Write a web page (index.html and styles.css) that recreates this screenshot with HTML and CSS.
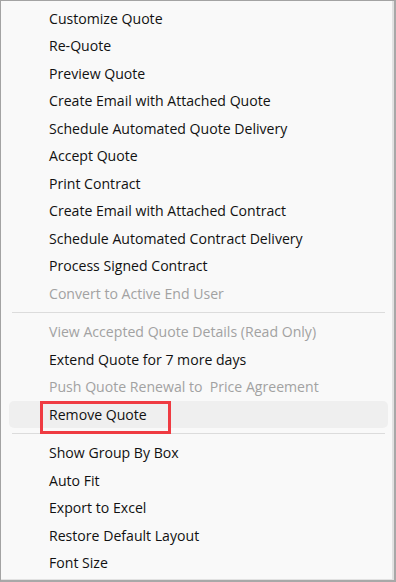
FILE: index.html
```
<!DOCTYPE html>
<html>
<head>
<meta charset="utf-8">
<link rel="stylesheet" href="styles.css">
</head>
<body>
<div class="menu">
  <div class="item">Customize Quote</div>
  <div class="item">Re-Quote</div>
  <div class="item">Preview Quote</div>
  <div class="item">Create Email with Attached Quote</div>
  <div class="item">Schedule Automated Quote Delivery</div>
  <div class="item">Accept Quote</div>
  <div class="item">Print Contract</div>
  <div class="item">Create Email with Attached Contract</div>
  <div class="item">Schedule Automated Contract Delivery</div>
  <div class="item">Process Signed Contract</div>
  <div class="item disabled">Convert to Active End User</div>
  <div class="sep"></div>
  <div class="item disabled">View Accepted Quote Details (Read Only)</div>
  <div class="item">Extend Quote for 7 more days</div>
  <div class="item disabled pre">Push Quote Renewal to  Price Agreement</div>
  <div class="item hover"><span class="label">Remove Quote</span><span class="mark"></span></div>
  <div class="sep"></div>
  <div class="item">Show Group By Box</div>
  <div class="item">Auto Fit</div>
  <div class="item">Export to Excel</div>
  <div class="item">Restore Default Layout</div>
  <div class="item">Font Size</div>
</div>
</body>
</html>
```
FILE: styles.css
```
html, body {
  margin: 0;
  padding: 0;
  background: #f9f9f9;
}
.menu {
  box-sizing: border-box;
  width: 396px;
  height: 582px;
  background: #f9f9f9;
  border: 1px solid #a3a3a3;
  border-right: 2px solid #a8a8a8;
  border-bottom: 2px solid #a8a8a8;
  box-shadow: inset -2px -1px 0 #e2e2e2;
  padding: 3.5px 6px 0 8px;
  font-family: "Open Sans", "Noto Sans", sans-serif;
  font-size: 14.1px;
  color: #111111;
}
.item {
  position: relative;
  height: 27.5px;
  line-height: 27.5px;
  padding-left: 40px;
  border-radius: 5px;
  white-space: nowrap;
}
.item.disabled {
  color: #a2a2a2;
}
.item.pre {
  white-space: pre;
}
.item.hover {
  background: #efefef;
}
.mark {
  position: absolute;
  left: 31px;
  top: 0;
  width: 125px;
  height: 27px;
  border: 3px solid #ef3b42;
}
.sep {
  height: 11px;
  display: flex;
  align-items: center;
  padding: 0 3px;
}
.sep::before {
  content: "";
  flex: 1;
  height: 1px;
  background: #dcdcdc;
}
```
